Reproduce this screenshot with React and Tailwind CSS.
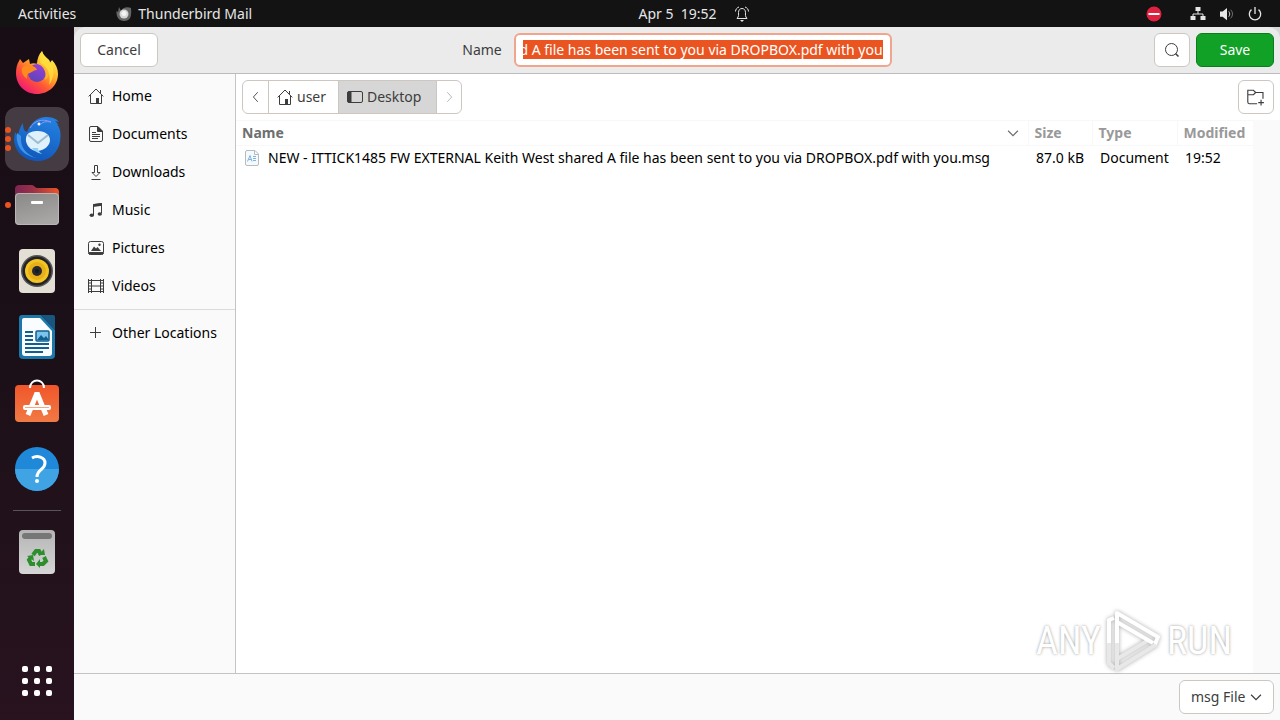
import React, { useEffect, useRef, useState } from 'react';

const FILE_NAME = 'NEW - ITTICK1485 FW EXTERNAL Keith West shared A file has been sent to you via DROPBOX.pdf with you';

function Icon({ size = 16, className = '', children }) {
  return (
    <svg
      width={size}
      height={size}
      viewBox="0 0 16 16"
      fill="none"
      stroke="currentColor"
      aria-hidden="true"
      className={`shrink-0 ${className}`}
    >
      {children}
    </svg>
  );
}

const HomeIcon = () => (
  <Icon>
    <path d="M.7 8.400 8 1l7.300 7.400M2.500 7v8.500h11V7M12.500 5V2" />
    <path d="M8 10h3v5.500H8z" fill="currentColor" stroke="none" />
  </Icon>
);

const DocumentIcon = () => (
  <Icon>
    <path d="M3 .5h7L14.500 5v9a1.500 1.500 0 0 1-1.500 1.500H3A1.500 1.500 0 0 1 1.500 14V2A1.500 1.500 0 0 1 3 .5z" />
    <path d="M9.500.5v5h5z" fill="currentColor" />
    <path d="M4 6.500h4M4 8.500h8M4 10.500h8M4 12.500h6" />
  </Icon>
);

const DownloadIcon = () => (
  <Icon>
    <path d="M6.500 1.500h3v7h2.500L8 12.500l-4-4h2.500zM3.500 15.500h9" />
  </Icon>
);

const MusicIcon = () => (
  <Icon>
    <path d="M5.500 13V2.500l8-1V11" />
    <path d="M5 2.300 14 1v2.800L5 5z" fill="currentColor" stroke="none" />
    <ellipse cx="3.800" cy="13.200" rx="2.200" ry="1.800" fill="currentColor" stroke="none" />
    <ellipse cx="11.800" cy="12" rx="2.200" ry="1.800" fill="currentColor" stroke="none" />
  </Icon>
);

const PictureIcon = () => (
  <Icon>
    <rect x=".5" y="1.500" width="15" height="13" rx="2" />
    <path d="M1 12.500h14v1.500H1z" fill="currentColor" />
    <path d="M3 11l3-4.500 2 2L9.500 7l3.500 4z" fill="currentColor" stroke="none" />
    <circle cx="11.500" cy="4.800" r="1.200" fill="currentColor" stroke="none" />
  </Icon>
);

const VideoIcon = () => (
  <Icon>
    <path d="M.5 1v14M3.500 1v14M12.500 1v14M15.500 1v14M3.500 2.500h9M3.500 8h9M3.500 13.500h9" />
    <path d="M.5 2.500h3M.5 5h3M.5 8h3M.5 11h3M.5 13.500h3M12.500 2.500h3M12.500 5h3M12.500 8h3M12.500 11h3M12.500 13.500h3" />
  </Icon>
);

const PlusIcon = () => (
  <Icon>
    <path d="M7.500 2v11M2 7.500h11" />
  </Icon>
);

const ChevronDown = ({ className }) => (
  <Icon size={12} className={className}>
    <path d="M1.500 5 8 11.500 14.500 5" strokeWidth="1.600" />
  </Icon>
);

const places = [
  { label: 'Home', icon: HomeIcon },
  { label: 'Documents', icon: DocumentIcon },
  { label: 'Downloads', icon: DownloadIcon },
  { label: 'Music', icon: MusicIcon },
  { label: 'Pictures', icon: PictureIcon },
  { label: 'Videos', icon: VideoIcon },
];

const files = [{ name: `${FILE_NAME}.msg`, size: '87.0 kB', type: 'Document', modified: '19:52' }];

function FirefoxIcon() {
  return (
    <svg width="48" height="48" viewBox="0 0 48 48" aria-hidden="true">
      <defs>
        <linearGradient id="fx-body" x1=".85" y1=".1" x2=".2" y2=".95">
          <stop offset="0" stopColor="#fff44f" />
          <stop offset=".35" stopColor="#ffb02a" />
          <stop offset=".65" stopColor="#ff5634" />
          <stop offset="1" stopColor="#f01878" />
        </linearGradient>
        <linearGradient id="fx-globe" x1=".7" y1="0" x2=".3" y2="1">
          <stop offset="0" stopColor="#9a3fd8" />
          <stop offset="1" stopColor="#5b45b8" />
        </linearGradient>
      </defs>
      <path
        d="M29 2c1 4 4 6 7 9l1 3 2-3c4 4 6 9 6 14 0 11-9 20-21 20S3 36 3 24c0-5 1-9 3-12l1-2 3 4 6-4 1 5c2-1 5-1 7 0 0-5 2-10 5-13z"
        fill="url(#fx-body)"
      />
      <circle cx="24" cy="24" r="9" fill="url(#fx-globe)" />
      <path d="M9 19c4-4 9-4 14 0l1 2c-3 0-5 2-7 3-3 0-3 3-3 6-4-3-6-7-5-11z" fill="#ff8a1e" />
      <path d="M23 14c7-1 12 3 13 9 0 4-2 7-4 8 2-8-1-14-9-17z" fill="#ffb42a" />
      <path d="M29 2c1 4 4 6 7 9 6 6 6 17 0 25 2-9 0-17-8-21-2-5 0-10 1-13z" fill="#ffe23f" opacity=".75" />
    </svg>
  );
}

function ThunderbirdIcon() {
  return (
    <svg width="48" height="48" viewBox="0 0 48 48" aria-hidden="true">
      <defs>
        <linearGradient id="tb-body" x1=".7" y1="0" x2=".3" y2="1">
          <stop offset="0" stopColor="#2480e0" />
          <stop offset="1" stopColor="#0f55b8" />
        </linearGradient>
      </defs>
      <path
        d="M10 8c0 5 1 8 4 9 4-9 9-14 18-15 6 0 11 1 14 5l-4-1 4 4-2-1c4 5 4 12 3 18-2 11-11 19-22 19C11 46 2 37 1 25l1-8 3 5c0-5 2-10 5-14z"
        fill="url(#tb-body)"
      />
      <path d="M4 18c-2 13 6 23 20 25-11-3-17-11-16-22z" fill="#3d94e8" />
      <path d="M17 13c4-7 12-10 21-6-5-1-8 0-10 2" fill="none" stroke="#8a9af0" />
      <path d="M14 20c-2 4-1 8 1 11 3 4 6 5 10 5 6-1 12-5 12-11 0-5-5-9-12-9-5 0-9 1-11 4z" fill="#dff1fb" />
      <path d="M15 20l10 8 10-8" fill="none" stroke="#9dbccd" strokeWidth="2" />
      <path d="M19 33c4 5 7 5 10 6-3-2-4-4-4-6z" fill="#8ed0f4" />
      <circle cx="26" cy="9" r="1.500" fill="#fff" />
    </svg>
  );
}

function FilesIcon() {
  return (
    <svg width="48" height="48" viewBox="0 0 48 48" aria-hidden="true">
      <defs>
        <linearGradient id="files-back">
          <stop offset="0" stopColor="#7b2553" />
          <stop offset=".4" stopColor="#9a3047" />
          <stop offset="1" stopColor="#ee5426" />
        </linearGradient>
        <linearGradient id="files-front" x1="0" y1="0" x2=".4" y2="1">
          <stop offset="0" stopColor="#8a8886" />
          <stop offset="1" stopColor="#a8a6a4" />
        </linearGradient>
      </defs>
      <path d="M6 4h13c2 0 3 3 5 3h18c3 0 4 2 4 4v14H2V8c0-3 2-4 4-4z" fill="url(#files-back)" />
      <rect x="2" y="12" width="44" height="32" rx="4" fill="url(#files-front)" />
      <rect x="2.500" y="12.500" width="43" height="31" rx="3.500" fill="none" stroke="#b9b7b5" />
      <rect x="18" y="20" width="12" height="3" rx="1" fill="#fff" />
    </svg>
  );
}

function RhythmboxIcon() {
  return (
    <svg width="48" height="48" viewBox="0 0 48 48" aria-hidden="true">
      <rect x="6" y="2" width="36" height="44" rx="4" fill="#e4dfd5" />
      <circle cx="24" cy="24" r="16" fill="#55555a" />
      <circle cx="24" cy="24" r="14.500" fill="#232225" />
      <circle cx="24" cy="24" r="12" fill="#f4c424" />
      <circle cx="24" cy="24" r="9" fill="#e6b01a" />
      <circle cx="24" cy="24" r="5" fill="#29282b" />
      <circle cx="24" cy="24" r="2" fill="#0e1c28" />
    </svg>
  );
}

function WriterIcon() {
  return (
    <svg width="48" height="48" viewBox="0 0 48 48" aria-hidden="true">
      <path d="M9 2h19l14 15v25a4 4 0 0 1-4 4H10a4 4 0 0 1-4-4V5a3 3 0 0 1 3-3z" fill="#1c78a8" />
      <path d="M11 5h16l12 13v22a3 3 0 0 1-3 3H12a3 3 0 0 1-3-3V7a2 2 0 0 1 2-2z" fill="#fafdff" />
      <path d="M28 2h12a2 2 0 0 1 2 2v13z" fill="#17567f" />
      <path
        d="M12 19h8M12 23h8M12 27h8M12 31h24M12 35h24M12 39h18"
        stroke="#12608f"
        strokeWidth="2"
      />
      <rect x="23" y="18" width="13" height="10" rx="1" fill="#7cc4ec" stroke="#12608f" strokeWidth="1.500" />
      <path d="M24 27l4-5 3 3 2-2 3 4z" fill="#12608f" />
    </svg>
  );
}

function SoftwareIcon() {
  return (
    <svg width="48" height="54" viewBox="0 0 48 54" aria-hidden="true">
      <defs>
        <linearGradient id="bag" x1="0" y1="0" x2="0" y2="1">
          <stop offset="0" stopColor="#f0562a" />
          <stop offset="1" stopColor="#f07a45" />
        </linearGradient>
      </defs>
      <rect x="2" y="9" width="44" height="37" rx="4" fill="url(#bag)" />
      <path d="M17 12c0-10 14-10 14 0" fill="none" stroke="#fff" strokeWidth="2" />
      <path d="M15 39l9-22 9 22" fill="none" stroke="#fff" strokeWidth="5" strokeLinejoin="bevel" />
      <rect x="10" y="29" width="28" height="5" rx="2" fill="#fff" />
      <path d="M12 31.500h24" stroke="#f3a688" />
    </svg>
  );
}

function HelpIcon() {
  return (
    <svg width="48" height="48" viewBox="0 0 48 48" aria-hidden="true">
      <circle cx="24" cy="24" r="22" fill="#2088d8" />
      <path d="M2 24a22 22 0 0 0 44 0z" fill="#3fa3e4" />
      <path d="M19 13c5-3 13-1 13 5 0 7-8 6-8 14" fill="none" stroke="#fff" strokeWidth="3" />
      <circle cx="24" cy="36" r="2" fill="#fff" />
    </svg>
  );
}

function TrashIcon() {
  return (
    <svg width="48" height="48" viewBox="0 0 48 48" aria-hidden="true">
      <defs>
        <linearGradient id="bin" x1="0" y1="0" x2="0" y2="1">
          <stop offset="0" stopColor="#b5b5b5" />
          <stop offset="1" stopColor="#d6d6d6" />
        </linearGradient>
      </defs>
      <rect x="6" y="2" width="36" height="44" rx="4" fill="url(#bin)" />
      <rect x="9" y="5" width="30" height="6" rx="3" fill="#777" />
      <g fill="none" stroke="#2c8f2c" strokeWidth="4">
        <path d="M20 27l3-4h3l2 4" />
        <path d="M31 29l2 4-3 3h-4" />
        <path d="M22 36h-4l-2-4 2-3" />
      </g>
      <path d="M25 27h7l-1-6zM27 31v9l-4-4zM14 28l6-1 1 6z" fill="#2c8f2c" />
    </svg>
  );
}

const dockApps = [
  { label: 'Firefox', icon: FirefoxIcon, windows: 0 },
  { label: 'Thunderbird Mail', icon: ThunderbirdIcon, windows: 3, active: true },
  { label: 'Files', icon: FilesIcon, windows: 1 },
  { label: 'Rhythmbox', icon: RhythmboxIcon, windows: 0 },
  { label: 'LibreOffice Writer', icon: WriterIcon, windows: 0 },
  { label: 'Ubuntu Software', icon: SoftwareIcon, windows: 0 },
  { label: 'Help', icon: HelpIcon, windows: 0 },
];

function DockButton({ app }) {
  const AppIcon = app.icon;

  return (
    <button
      aria-label={app.label}
      className={`relative flex h-16 w-16 items-center justify-center rounded-xl ${app.active ? 'bg-[#453b42]' : ''}`}
    >
      <AppIcon />
      {app.windows > 0 && (
        <span className="absolute inset-y-0 left-0 flex flex-col items-center justify-center gap-[3px]">
          {Array.from({ length: app.windows }, (_, i) => (
            <span key={i} className="h-1.5 w-1.5 rounded-full bg-[#e95420]" />
          ))}
        </span>
      )}
    </button>
  );
}

function Dock() {
  return (
    <nav className="flex w-[74px] shrink-0 flex-col items-center bg-linear-to-b from-[#180d14] via-[#1c1018] to-[#28131f] pt-3.5 pb-[7px]">
      <div className="flex flex-col gap-0.5">
        {dockApps.map((app) => (
          <DockButton key={app.label} app={app} />
        ))}
      </div>
      <div className="mt-[9px] mb-[9px] h-px w-12 bg-[#5c5359]" />
      <DockButton app={{ label: 'Trash', icon: TrashIcon, windows: 0 }} />
      <button aria-label="Show Applications" className="mt-auto flex h-16 w-16 items-center justify-center">
        <span className="grid grid-cols-3 gap-1.5">
          {Array.from({ length: 9 }, (_, i) => (
            <span key={i} className="h-1.5 w-1.5 rounded-xs bg-white" />
          ))}
        </span>
      </button>
    </nav>
  );
}

function TopBar() {
  return (
    <header className="grid h-[27px] shrink-0 grid-cols-[1fr_auto_1fr] items-center bg-[#131313] text-[#e6e6e6]">
      <div className="flex items-center gap-10 pl-[18px]">
        <button>Activities</button>
        <button className="flex items-center gap-1.5">
          <svg width="16" height="16" viewBox="0 0 16 16" aria-hidden="true">
            <path d="M3 1l2 4c1-3 6-5 10-3 1 9-1 13-7 13C3 15 0 11 .5 5L2 6z" fill="#666" />
            <circle cx="8" cy="8" r="4.500" fill="#d6d6d6" />
            <circle cx="8" cy="7.500" r="2.500" fill="#f4f4f4" />
          </svg>
          Thunderbird Mail
        </button>
      </div>
      <div className="flex items-center gap-[17px] pl-[108px]">
        <button className="whitespace-pre">Apr 5  19:52</button>
        <Icon>
          <path d="M3 12.500c2-2 1.500-4 1.500-6C4.500 4 6 2.500 8 2.500S11.500 4 11.500 6.500c0 2-.5 4 1.500 6zM1.500 5.500C1.500 3.500 3 1.500 5 1M14.500 5.500c0-2-1.500-4-3.500-4.500" />
          <path d="M6 14h4l-2 2z" fill="currentColor" stroke="none" />
        </Icon>
      </div>
      <div className="flex items-center justify-end gap-3.5 pr-[18px]">
        <svg width="16" height="16" viewBox="0 0 16 16" className="mr-3.5" aria-hidden="true">
          <circle cx="8" cy="8" r="7.500" fill="#e0213f" />
          <rect x="2.500" y="7" width="11" height="2" fill="#fff" />
        </svg>
        <Icon>
          <path d="M8 4v4M3 11V8h10v3" />
          <path d="M5.500 1h5v4h-5zM.5 10h5v4h-5zM10.500 10h5v4h-5z" fill="currentColor" stroke="none" />
        </Icon>
        <Icon size={14}>
          <path d="M0 5h3l5-4v14l-5-4H0z" fill="currentColor" stroke="none" />
          <path d="M10 5c1.500 2 1.500 4 0 6" />
          <path d="M12 3c3 3 3 7 0 10" opacity=".5" />
        </Icon>
        <Icon size={14}>
          <path d="M4 3a6.500 6.500 0 1 0 8 0M8 0v8" strokeWidth="1.500" />
        </Icon>
      </div>
    </header>
  );
}

function DialogHeader() {
  const [name, setName] = useState(FILE_NAME);
  const inputRef = useRef(null);

  useEffect(() => {
    const input = inputRef.current;
    input.focus();
    input.select();
    input.scrollLeft = input.scrollWidth;
  }, []);

  return (
    <div className="grid grid-cols-[1fr_auto_1fr] items-center rounded-t-xl border-b border-[#bcbcbc] bg-[#ebebeb] px-1.5 py-1.5 text-[#3d3d3d]">
      <div>
        <button className="h-[34px] w-[78px] rounded-md border border-[#cdc7c2] bg-white">Cancel</button>
      </div>
      <div className="flex items-center gap-3">
        <label htmlFor="file-name">Name</label>
        <input
          id="file-name"
          ref={inputRef}
          value={name}
          onChange={(e) => setName(e.target.value)}
          className="h-[34px] w-[378px] rounded-md border-2 border-[#f0a58c] bg-white px-[7px] pb-0.5 outline-none selection:bg-[#e95420] selection:text-white"
        />
      </div>
      <div className="flex justify-end gap-1.5">
        <button
          aria-label="Search"
          className="flex h-[34px] w-9 items-center justify-center rounded-md border border-[#cdc7c2] bg-white"
        >
          <Icon>
            <circle cx="7.500" cy="7.500" r="6" />
            <path d="M11.500 11.500l3 3" strokeWidth="1.500" />
          </Icon>
        </button>
        <button className="h-[34px] w-[78px] rounded-md border border-[#0c7d1c] bg-[#12a127] text-white">Save</button>
      </div>
    </div>
  );
}

function Sidebar() {
  return (
    <aside className="w-[162px] shrink-0 border-r border-[#c4c4c4] bg-[#fafafa] pt-[3px] text-black">
      <ul>
        {places.map(({ label, icon: PlaceIcon }) => (
          <li key={label}>
            <a href="#" className="flex h-[38px] items-center gap-2 pl-3.5">
              <span className="text-[#3d3d3d]">
                <PlaceIcon />
              </span>
              {label}
            </a>
          </li>
        ))}
      </ul>
      <a href="#" className="mt-1 flex h-[46px] items-center gap-2 border-t border-[#dadada] pl-3.5">
        <span className="text-[#3d3d3d]">
          <PlusIcon />
        </span>
        Other Locations
      </a>
    </aside>
  );
}

function PathBar() {
  return (
    <div className="flex items-center justify-between p-1.5 text-[#3d3d3d]">
      <div className="flex h-[34px] overflow-hidden rounded-md border border-[#cdc7c2] bg-white">
        <button aria-label="Back" className="flex w-[26px] items-center justify-center border-r border-[#cdc7c2]">
          <Icon size={14}>
            <path d="M10 2.500 5 8l5 5.500" />
          </Icon>
        </button>
        <button className="flex w-[70px] items-center gap-1 border-r border-[#cdc7c2] pl-2">
          <HomeIcon />
          user
        </button>
        <button className="flex w-[98px] items-center gap-1 border-r border-[#cdc7c2] bg-[#d6d6d6] pl-2">
          <Icon>
            <rect x=".5" y="2.500" width="15" height="11" rx="1.500" />
            <path d="M1 3h3v10H1z" fill="currentColor" />
          </Icon>
          Desktop
        </button>
        <button aria-label="Forward" disabled className="flex w-6 items-center justify-center text-[#b0b0b0]">
          <Icon size={14}>
            <path d="M6 2.500 11 8l-5 5.500" />
          </Icon>
        </button>
      </div>
      <button
        aria-label="Create Folder"
        className="flex h-[34px] w-9 items-center justify-center rounded-md border border-[#cdc7c2] bg-white"
      >
        <Icon size={18}>
          <path d="M9 14H2A1.500 1.500 0 0 1 .7 12.500V2h5l2 2h6.500v5.500M.7 6h5l2-2M12.500 10.500v5M10 13h5" />
        </Icon>
      </button>
    </div>
  );
}

function FileTable() {
  return (
    <table className="w-full table-fixed border-collapse text-left">
      <thead>
        <tr className="h-[25px] border-y border-[#f8f8f8] text-[#999]">
          <th className="border-r border-[#f8f8f8] pr-[9px] pl-1.5 font-bold text-[#6e6e6e]">
            <span className="flex items-center justify-between">
              Name
              <ChevronDown />
            </span>
          </th>
          <th className="w-16 border-r border-[#f8f8f8] pl-1.5 font-bold">Size</th>
          <th className="w-[85px] border-r border-[#f8f8f8] pl-1.5 font-bold">Type</th>
          <th className="w-[76px] pl-1.5 font-bold">Modified</th>
        </tr>
      </thead>
      <tbody>
        {files.map((file) => (
          <tr key={file.name} className="h-[25px] whitespace-nowrap text-black">
            <td className="pl-2">
              <span className="flex items-center gap-2">
                <svg width="16" height="16" viewBox="0 0 16 16" aria-hidden="true" className="shrink-0">
                  <path d="M3 .5h8L14.500 4v10a1.500 1.500 0 0 1-1.500 1.500H3A1.500 1.500 0 0 1 1.500 14V2A1.500 1.500 0 0 1 3 .5z" fill="#f6fafd" stroke="#b4bcc4" />
                  <path d="M10.500.5v4h4" fill="none" stroke="#b4bcc4" />
                  <path d="M3.500 11.500l2.500-6 2 6M4.500 9.500h3M9 6.500h3M9 8.500h3M9 10.500h3" fill="none" stroke="#7fb2dc" />
                </svg>
                {file.name}
              </span>
            </td>
            <td className="pl-2">{file.size}</td>
            <td className="pl-2">{file.type}</td>
            <td className="pl-2">{file.modified}</td>
          </tr>
        ))}
      </tbody>
    </table>
  );
}

function Watermark() {
  return (
    <div className="pointer-events-none absolute right-12 bottom-0 flex items-center gap-1 font-['Liberation_Sans_Narrow','Roboto_Condensed','Liberation_Sans',sans-serif] text-[38px] leading-none text-white [text-shadow:0_0_3px_#999]">
      <span>ANY</span>
      <svg width="58" height="64" viewBox="0 0 58 64" fill="none" className="drop-shadow-[0_0_2px_#aaa]" aria-hidden="true">
        <g strokeWidth="4" strokeLinejoin="round">
          <path d="M12 34v26l40-25M4 34v20l5 5M12 50l30-18" stroke="#e8e8e8" />
          <path d="M12 34V4l41 24-3 7M4 34V11l5-2M12 13l36 21" stroke="#fff" />
        </g>
      </svg>
      <span>RUN</span>
    </div>
  );
}

export default function App() {
  return (
    <div className="flex min-h-screen flex-col font-['Noto_Sans','Open_Sans',sans-serif] text-[14px] leading-[18px]">
      <TopBar />
      <div className="flex flex-1 bg-[#d9d6d8]">
        <Dock />
        <main className="flex min-w-0 flex-1 flex-col">
          <DialogHeader />
          <div className="flex flex-1 bg-white">
            <Sidebar />
            <section className="relative flex min-w-0 flex-1 flex-col">
              <PathBar />
              <div className="flex flex-1 items-stretch">
                <div className="min-w-0 flex-1">
                  <FileTable />
                </div>
                <div className="w-[27px] bg-[#fafafa]" />
              </div>
              <Watermark />
            </section>
          </div>
          <footer className="flex justify-end border-t border-[#c4c4c4] bg-[#fafafa] p-1.5 text-[#3d3d3d]">
            <div className="relative">
              <select
                aria-label="File type"
                className="h-[34px] w-[95px] appearance-none rounded-md border border-[#cdc7c2] bg-white pl-[11px]"
              >
                <option>msg File</option>
              </select>
              <ChevronDown className="pointer-events-none absolute top-[11px] right-3" />
            </div>
          </footer>
        </main>
      </div>
    </div>
  );
}
